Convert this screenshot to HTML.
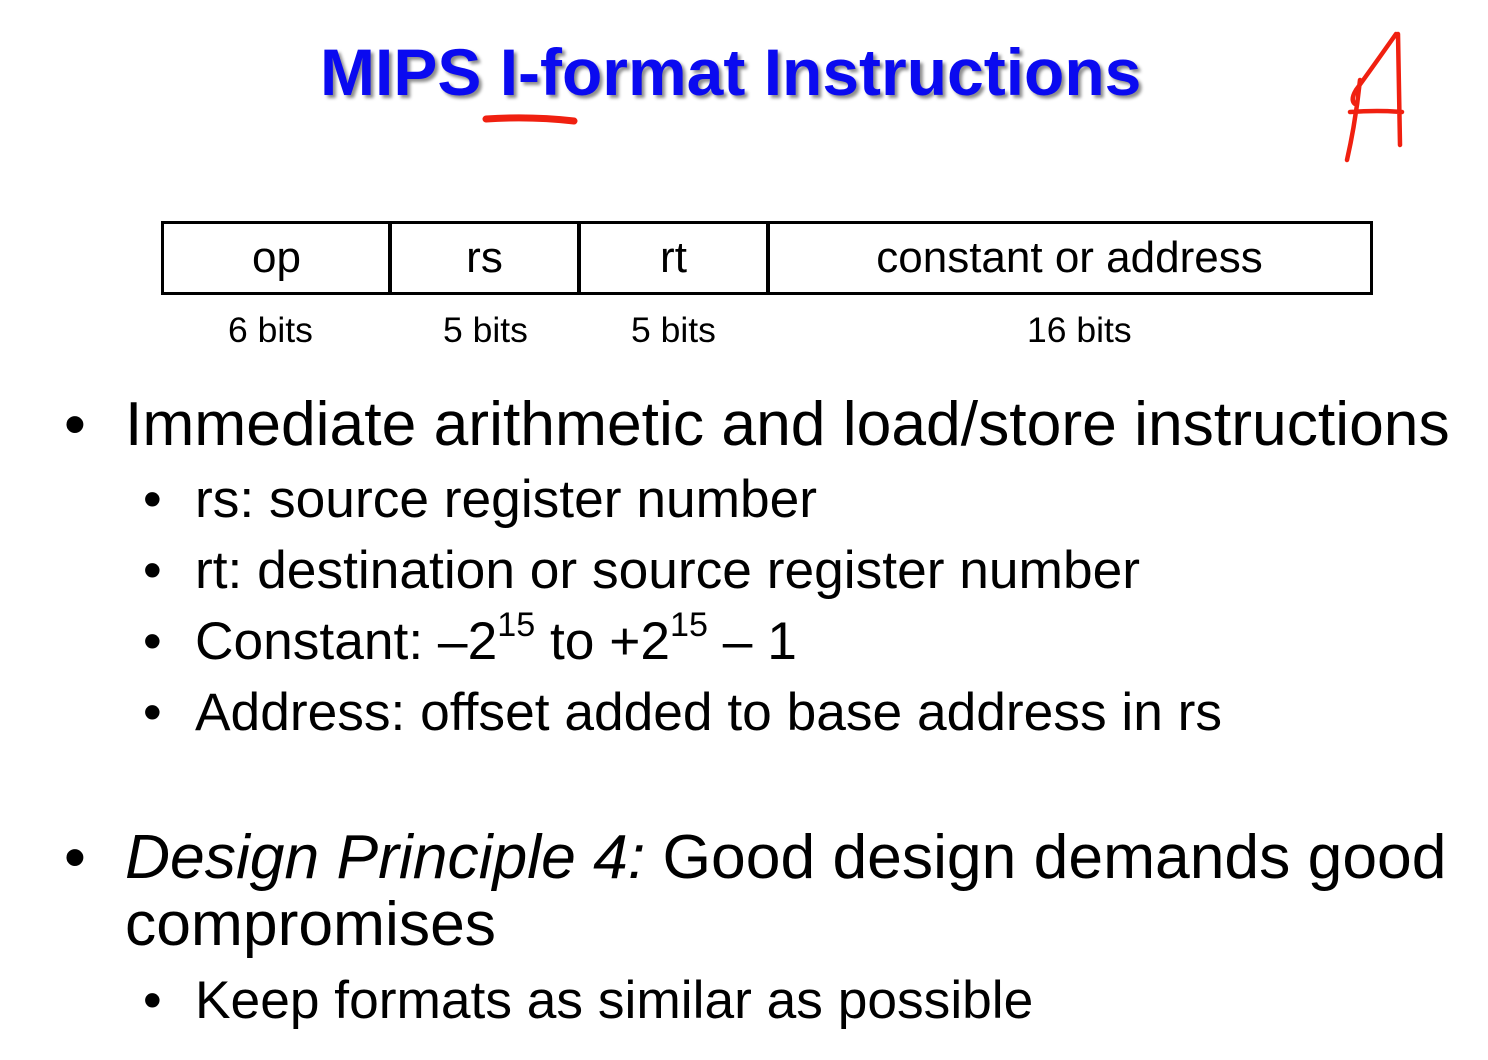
<!DOCTYPE html>
<html><head><meta charset="utf-8"><style>
html,body{margin:0;padding:0;background:#fff;}
body{width:1488px;height:1060px;position:relative;overflow:hidden;font-family:"Liberation Sans",Arial,sans-serif;color:#000;}
.t{position:absolute;white-space:nowrap;line-height:1;}
.title{font-weight:bold;font-size:66px;color:#0a0af0;text-shadow:3px 3px 3px rgba(0,0,0,0.45);left:320px;top:39px;}
.l1{font-size:62.4px;}
.l2{font-size:53.3px;}
.cell{position:absolute;top:221px;height:74px;border:3px solid #000;box-sizing:border-box;font-size:44px;text-align:center;line-height:68px;}
.bits{font-size:35.5px;}
sup{font-size:0.64em;vertical-align:0;position:relative;top:-0.68em;}
</style></head><body>
<div class="t title">MIPS I-format Instructions</div>
<svg style="position:absolute;left:0;top:0" width="1488" height="200">
<path d="M486 119 Q530 116 574 121" stroke="#f02010" stroke-width="7" fill="none" stroke-linecap="round"/>
<path d="M1396 34 Q1372 68 1356 90 Q1350 100 1355 104 M1398 34 L1400 145 M1360 80 Q1356 120 1347 160 M1350 112 Q1378 110 1402 112" stroke="#f02010" stroke-width="4.5" fill="none" stroke-linecap="round"/>
</svg>
<div class="cell" style="left:161px;width:231px;">op</div>
<div class="cell" style="left:388px;width:193px;">rs</div>
<div class="cell" style="left:577px;width:193px;">rt</div>
<div class="cell" style="left:766px;width:607px;">constant or address</div>
<div class="t bits" style="left:228px;top:313px;">6 bits</div>
<div class="t bits" style="left:443px;top:313px;">5 bits</div>
<div class="t bits" style="left:631px;top:313px;">5 bits</div>
<div class="t bits" style="left:1027px;top:313px;">16 bits</div>

<div class="t l1" style="left:64px;top:394px;">•</div>
<div class="t l1" style="left:125px;top:394px;">Immediate arithmetic and load/store instructions</div>
<div class="t l2" style="left:143px;top:473px;">•</div>
<div class="t l2" style="left:195px;top:473px;">rs: source register number</div>
<div class="t l2" style="left:143px;top:544px;">•</div>
<div class="t l2" style="left:195px;top:544px;">rt: destination or source register number</div>
<div class="t l2" style="left:143px;top:615px;">•</div>
<div class="t l2" style="left:195px;top:615px;">Constant: –2<sup>15</sup> to +2<sup>15</sup> – 1</div>
<div class="t l2" style="left:143px;top:686px;">•</div>
<div class="t l2" style="left:195px;top:686px;">Address: offset added to base address in rs</div>

<div class="t l1" style="left:64px;top:827px;">•</div>
<div class="t l1" style="left:125px;top:827px;"><i>Design Principle 4:</i> Good design demands good</div>
<div class="t l1" style="left:125px;top:894px;">compromises</div>
<div class="t l2" style="left:143px;top:974px;">•</div>
<div class="t l2" style="left:195px;top:974px;">Keep formats as similar as possible</div>
</body></html>
